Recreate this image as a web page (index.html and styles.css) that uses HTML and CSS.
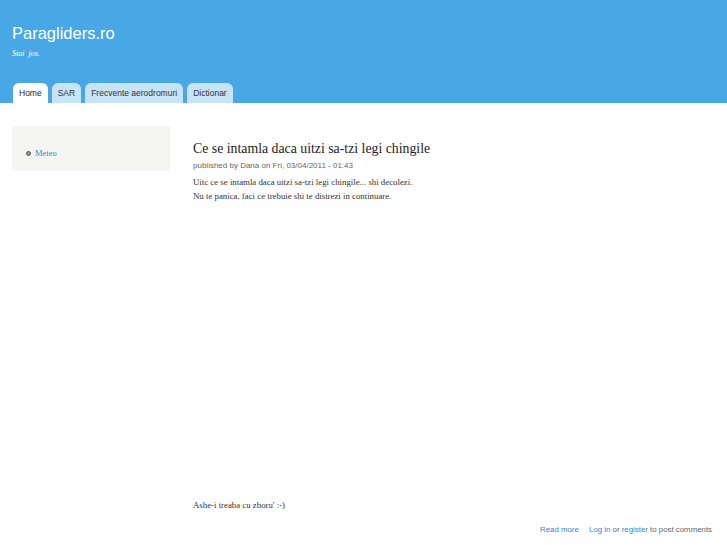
FILE: index.html
```html
<!DOCTYPE html>
<html>
<head>
<meta charset="utf-8">
<link rel="stylesheet" href="styles.css">
</head>
<body>
<div class="header">
  <div class="branding">
    <div class="site-name">Paragliders.ro</div>
    <div class="slogan">Stai jos.</div>
  </div>
  <ul class="tabs">
    <li class="tab active">Home</li>
    <li class="tab">SAR</li>
    <li class="tab">Frecvente aerodromuri</li>
    <li class="tab">Dictionar</li>
  </ul>
</div>
<div class="page">
  <div class="sidebar">
    <ul class="menu">
      <li><a href="#">Meteo</a></li>
    </ul>
  </div>
  <div class="main">
    <h2 class="title">Ce se intamla daca uitzi sa-tzi legi chingile</h2>
    <div class="meta">published by Dana on Fri, 03/04/2011 - 01:43</div>
    <div class="body">
      <p>Uitc ce se intamla daca uitzi sa-tzi legi chingile... shi decolezi.<br>Nu te panica, faci ce trebuie shi te distrezi in continuare.</p>
      <div class="video"></div>
      <p>Ashe-i treaba cu zboru' :-)</p>
    </div>
    <div class="links">
      <a href="#">Read more</a>
      <span class="login"><a href="#">Log in</a> or <a href="#">register</a> to post comments</span>
    </div>
  </div>
</div>
</body>
</html>
```
FILE: styles.css
```css
html, body {
  margin: 0;
  padding: 0;
  background: #ffffff;
}
body {
  font-family: "Liberation Sans", Arial, sans-serif;
}
.header {
  background: #48a8e5;
  height: 103px;
  display: flex;
  flex-direction: column;
  justify-content: space-between;
}
.branding {
  padding: 22px 0 0 12px;
}
.site-name {
  color: #ffffff;
  font-size: 16.5px;
  line-height: 22px;
}
.slogan {
  color: #ffffff;
  font-family: "Liberation Serif", serif;
  font-style: italic;
  font-size: 8px;
  line-height: 12px;
  margin-top: 4px;
  word-spacing: 2px;
}
.tabs {
  list-style: none;
  margin: 0;
  padding: 0 0 0 13px;
  display: flex;
  gap: 4px;
}
.tab {
  background: #c7e4f7;
  color: #333;
  font-size: 8.5px;
  height: 20px;
  line-height: 20px;
  padding: 0 6px;
  border-radius: 6px 6px 0 0;
}
.tab.active {
  background: #ffffff;
  color: #222;
}
.page {
  display: flex;
  padding: 23px 12px 0 12px;
  gap: 23px;
}
.sidebar {
  width: 158px;
  flex: none;
  background: #f5f5f1;
  height: 45px;
  box-sizing: border-box;
  padding-top: 21px;
}
.menu {
  margin: 0;
  padding: 0 0 0 14px;
  list-style: none;
}
.menu li {
  font-family: "Liberation Serif", serif;
  font-size: 8.5px;
  line-height: 12px;
  display: flex;
  align-items: center;
}
.menu li::before {
  content: "";
  width: 3px;
  height: 3px;
  border: 1px solid #555;
  border-radius: 50%;
  background: #999;
  margin-right: 4px;
}
a {
  color: #2a8ad3;
  text-decoration: none;
}
.main {
  flex: 1;
  min-width: 0;
}
.title {
  font-family: "Liberation Serif", serif;
  font-weight: normal;
  font-size: 13.8px;
  line-height: 18px;
  color: #222;
  margin: 14px 0 0 0;
}
.meta {
  font-size: 8px;
  color: #666;
  line-height: 12px;
  margin-top: 2px;
}
.body {
  font-family: "Liberation Serif", serif;
  font-size: 8.8px;
  color: #333;
  line-height: 14px;
}
.body p {
  margin: 3px 0 0 0;
}
.video {
  height: 292px;
}
.links {
  text-align: right;
  font-size: 7.85px;
  color: #666;
  margin-top: 13px;
  padding-right: 3px;
}
.links .login {
  margin-left: 8px;
}
```
